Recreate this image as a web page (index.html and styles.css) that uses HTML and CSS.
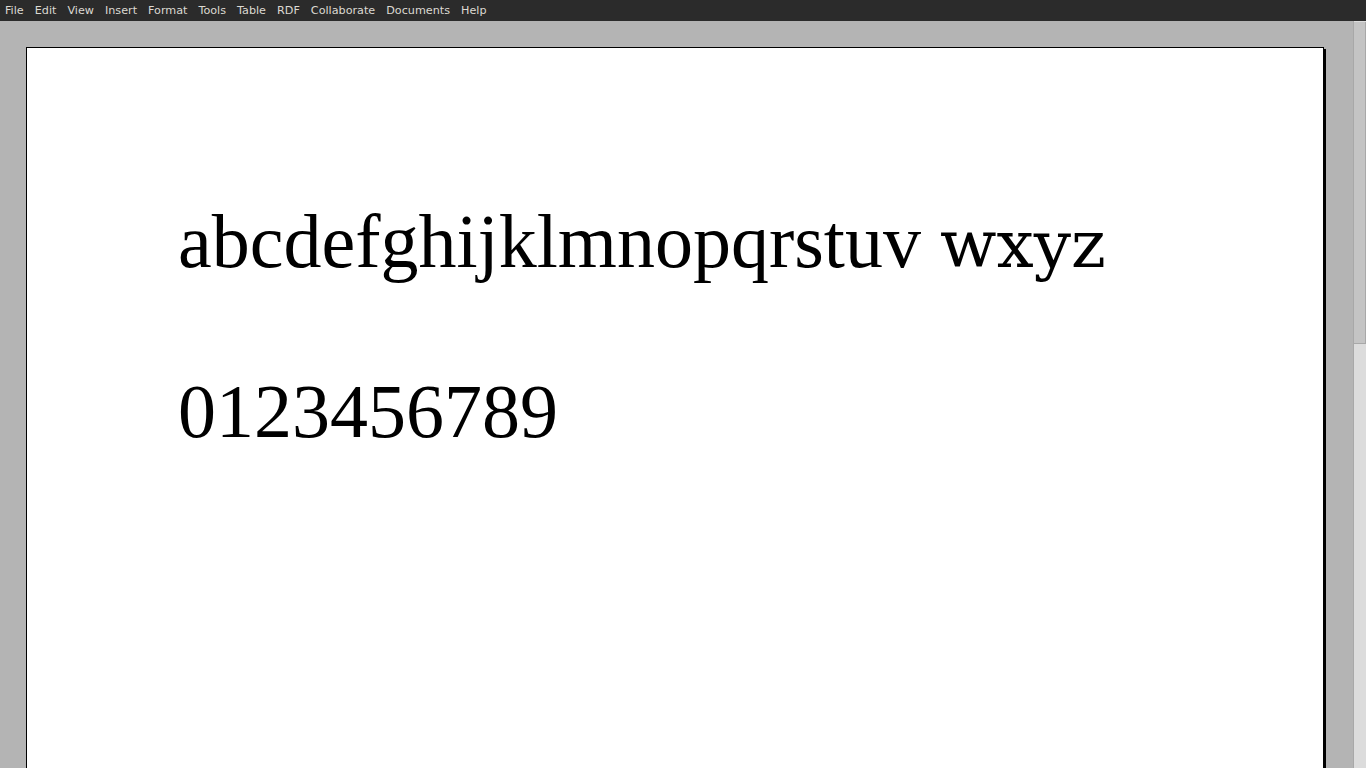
FILE: index.html
```html
<!DOCTYPE html>
<html>
<head>
<meta charset="utf-8">
<link rel="stylesheet" href="styles.css">
</head>
<body>
<div class="menubar">
  <span class="menu-item">File</span>
  <span class="menu-item">Edit</span>
  <span class="menu-item">View</span>
  <span class="menu-item">Insert</span>
  <span class="menu-item">Format</span>
  <span class="menu-item">Tools</span>
  <span class="menu-item">Table</span>
  <span class="menu-item">RDF</span>
  <span class="menu-item">Collaborate</span>
  <span class="menu-item">Documents</span>
  <span class="menu-item">Help</span>
</div>
<div class="main">
  <div class="workspace">
    <div class="page">
      <p class="line letters">abcdefghijklmnopqrstuv <span class="fallback">wxyz</span></p>
      <p class="line digits">0123456789</p>
    </div>
  </div>
  <div class="scrollbar">
    <div class="thumb"></div>
  </div>
</div>
</body>
</html>
```
FILE: styles.css
```css
html, body {
  margin: 0;
  padding: 0;
  height: 100%;
  overflow: hidden;
}
body {
  background: #b4b4b4;
  display: flex;
  flex-direction: column;
}
.menubar {
  height: 21px;
  background: #2b2b2b;
  display: flex;
  align-items: center;
  gap: 11px;
  padding-left: 5px;
  font-family: "DejaVu Sans", sans-serif;
  font-size: 11.2px;
  color: #dcd9d2;
  flex: none;
}
.menu-item {
  line-height: 22px;
}
.main {
  flex: 1;
  display: flex;
  min-height: 0;
}
.workspace {
  flex: 1;
  padding: 26px 0 0 26px;
  overflow: hidden;
}
.page {
  width: 1298px;
  height: 900px;
  background: #fff;
  border: 1px solid #000;
  box-shadow: 2px 2px 0 #000;
  box-sizing: border-box;
  padding: 155px 0 0 151px;
}
.line {
  margin: 0;
  font-family: "Liberation Serif", serif;
  font-size: 76px;
  line-height: 1;
  color: #000;
  white-space: nowrap;
}
.digits {
  margin-top: 94px;
}
.fallback {
  font-family: "DejaVu Serif", serif;
  font-size: 66px;
}
.scrollbar {
  width: 13px;
  flex: none;
  background: #dcdcdc;
  border-left: 1px solid #a8a8a8;
  box-sizing: border-box;
  display: flex;
  flex-direction: column;
}
.thumb {
  height: 321px;
  margin-top: 1px;
  background: #c4c4c4;
  border-bottom: 1px solid #a8a8a8;
  border-right: 1px solid #a8a8a8;
}
```
